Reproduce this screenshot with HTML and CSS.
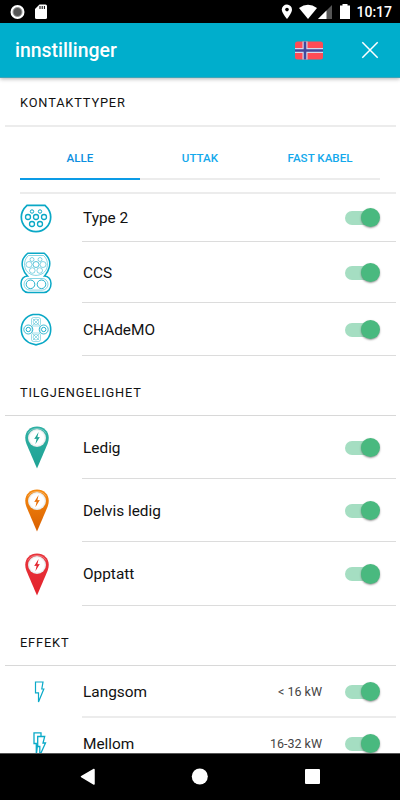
FILE: index.html
```html
<!DOCTYPE html>
<html lang="no">

<head>
    <meta charset="UTF-8">
    <meta name="viewport" content="width=device-width, initial-scale=1.0">
    <title>innstillinger</title>
    <link rel="stylesheet" href="styles.css">
</head>

<body>
    <!-- shared icons -->
    <svg class="defs" width="0" height="0">
        <defs>
            <radialGradient id="disc">
                <stop offset="0.75" stop-color="#fff" />
                <stop offset="1" stop-color="#dfe3e3" />
            </radialGradient>
            <linearGradient id="teal" x1="0" y1="0" x2="0" y2="1">
                <stop offset="0" stop-color="#2fb0a4" />
                <stop offset="1" stop-color="#1fa294" />
            </linearGradient>
            <linearGradient id="orange" x1="0" y1="0" x2="0" y2="1">
                <stop offset="0" stop-color="#f58a10" />
                <stop offset="1" stop-color="#d95f00" />
            </linearGradient>
            <linearGradient id="red" x1="0" y1="0" x2="0" y2="1">
                <stop offset="0" stop-color="#e8353d" />
                <stop offset="1" stop-color="#e3222b" />
            </linearGradient>
            <symbol id="pin" viewBox="0 0 24 43">
                <path d="M12 42.5 L1.500 18 C-2.500 8 3.500 0.500 12 0.500 S26.500 8 22.500 18 Z" />
                <path d="M3 7.500 C6 0.800 18 0.800 21 7.500" fill="none" stroke="#fff" stroke-opacity="0.4" stroke-width="0.800" />
                <circle cx="12" cy="12" r="9" fill="url(#disc)" />
                <path d="M13.600 6 L9.200 13 L11.600 12.800 L10.400 18.300 L14.800 11 L12.400 11.200 Z" fill="currentColor" />
            </symbol>
        </defs>
    </svg>

    <div class="status-bar">
        <svg class="status-left" width="60" height="23" viewBox="0 0 60 23">
            <circle cx="17.500" cy="12" r="7" fill="#fff" />
            <circle cx="17.500" cy="12" r="4.500" fill="#555" stroke="#999" stroke-width="1" />
            <path d="M39.500 4.500 H45.500 Q47 4.500 47 6 V17.500 Q47 19 45.500 19 H36.500 Q35 19 35 17.500 V9 Z" fill="#fff" />
            <path d="M40 6 V9 M42.200 6 V9 M44.400 6 V9" stroke="#000" stroke-width="1" />
        </svg>
        <div class="status-right">
            <svg width="72" height="23" viewBox="280 0 72 23">
                <path d="M288 4.500 A5.200 5.200 0 0 1 293 9.500 C293 13 288 19 288 19 S282.800 13 282.800 9.500 A5.200 5.200 0 0 1 288 4.500 Z" fill="#fff" />
                <circle cx="288" cy="9.600" r="1.800" fill="#000" />
                <path d="M300 8 Q309 1.500 318 8 L309 19 Z" fill="#fff" />
                <path d="M333 5 V19 H319 Z" fill="#555" />
                <path d="M327.500 10.500 V19 H319 Z" fill="#fff" />
                <path d="M343.500 4 H348.500 V5.500 H351 V19 H341 V5.500 H343.500 Z" fill="#fff" />
            </svg>
            <span class="clock">10:17</span>
        </div>
    </div>

    <header class="header">
        <h1>innstillinger</h1>
        <svg class="flag" width="28" height="19" viewBox="0 0 28 19">
            <rect x="0" y="0.500" width="28" height="18" rx="2.500" fill="#ff4b55" />
            <path d="M10 0.500 V18.500 M0 9.500 H28" stroke="#d3d9ea" stroke-width="5" />
            <path d="M10 0.500 V18.500 M0 9.500 H28" stroke="#41479b" stroke-width="2.600" />
        </svg>
        <svg class="close" width="18" height="18" viewBox="0 0 18 18">
            <path d="M1.300 1.300 L16.700 16.700 M16.700 1.300 L1.300 16.700" stroke="#fff" stroke-width="1.500" />
        </svg>
    </header>

    <main class="content">
        <section>
            <h2 class="first">KONTAKTTYPER</h2>
            <div class="tabs">
                <div class="tab active">ALLE</div>
                <div class="tab">UTTAK</div>
                <div class="tab">FAST KABEL</div>
            </div>

            <div class="row type2">
                <div class="icon">
                    <svg width="32" height="29" viewBox="0 0 32 29" fill="none" stroke="#0aa8c6" stroke-width="1.300">
                        <path d="M7 1.300 H25 Q30.700 6.500 30.700 13 A14.700 14.700 0 0 1 1.300 13 Q1.300 6.500 7 1.300 Z" stroke-width="1.700" />
                        <circle cx="12" cy="7.500" r="1.700" stroke-width="1" />
                        <circle cx="20" cy="7.500" r="1.700" stroke-width="1" />
                        <circle cx="8" cy="13" r="2.500" />
                        <circle cx="16" cy="13" r="2.500" />
                        <circle cx="24" cy="13" r="2.500" />
                        <circle cx="12" cy="20" r="2.500" />
                        <circle cx="20" cy="20" r="2.500" />
                    </svg>
                </div>
                <div class="body"><span class="name">Type 2</span><span class="toggle"></span></div>
            </div>
            <div class="row ccs">
                <div class="icon">
                    <svg width="32" height="42" viewBox="0 0 32 42" fill="none" stroke="#0aa8c6" stroke-width="0.500">
                        <path d="M8 1.200 H24 C29 5 31 10 29 16 C28 20 26.500 21.500 24.500 24 C28.500 24 31 27.500 31 31.500 C31 37 28 40.500 24 40.500 H8 C4 40.500 1 37 1 31.500 C1 27.500 3.500 24 7.500 24 C5 21.500 3.800 20 2.800 16 C1 10 3 5 8 1.200 Z" stroke-width="1.500" />
                        <path d="M8.500 3.500 H23.500 C28 7.500 28 13 26.500 17 C22.500 25.500 9.500 25.500 5.500 17 C4 13 4 7.500 8.500 3.500 Z" />
                        <circle cx="12" cy="7.500" r="2" />
                        <circle cx="20" cy="7.500" r="2" />
                        <circle cx="9" cy="12.500" r="3" />
                        <circle cx="16" cy="12.500" r="3" stroke-width="0.700" />
                        <circle cx="23" cy="12.500" r="3" />
                        <circle cx="12.300" cy="18.500" r="2.800" />
                        <circle cx="19.700" cy="18.500" r="2.800" />
                        <rect x="4" y="26.500" width="24" height="11.600" rx="5.800" />
                        <circle cx="10.500" cy="32.300" r="4.300" stroke-width="0.900" />
                        <circle cx="21.500" cy="32.300" r="4.300" stroke-width="0.900" />
                    </svg>
                </div>
                <div class="body"><span class="name">CCS</span><span class="toggle"></span></div>
            </div>
            <div class="row chademo">
                <div class="icon">
                    <svg width="32" height="33" viewBox="0 0 32 33" fill="none" stroke="#0aa8c6" stroke-width="0.400">
                        <path d="M13 1.500 H19 C26 3 30.700 9 30.700 16.500 S26 29.500 19 31 L16 31.800 L13 31 C6 29.500 1.300 24 1.300 16.500 S6 3 13 1.500 Z" stroke-width="1.600" />
                        <circle cx="8.300" cy="16.500" r="4.500" stroke-width="0.800" />
                        <circle cx="8.300" cy="16.500" r="2.200" stroke-width="0.900" />
                        <circle cx="23.700" cy="16.500" r="4.500" stroke-width="0.800" />
                        <circle cx="23.700" cy="16.500" r="2.200" stroke-width="0.900" />
                        <rect x="11.500" y="4.500" width="9" height="8.500" rx="2" />
                        <rect x="11.500" y="20" width="9" height="8.500" rx="2" />
                        <circle cx="16" cy="8.800" r="2.800" />
                        <circle cx="16" cy="24.200" r="2.800" />
                        <path d="M13 6 L19 12 M19 6 L13 12 M13 21 L19 27 M19 21 L13 27 M12 13 V20 M20 13 V20" />
                    </svg>
                </div>
                <div class="body"><span class="name">CHAdeMO</span><span class="toggle"></span></div>
            </div>
        </section>

        <section>
            <h2>TILGJENGELIGHET</h2>
            <div class="row pin-row">
                <div class="icon teal"><svg class="pin" width="24" height="43" fill="url(#teal)"><use href="#pin" /></svg></div>
                <div class="body"><span class="name">Ledig</span><span class="toggle"></span></div>
            </div>
            <div class="row pin-row">
                <div class="icon orange"><svg class="pin" width="24" height="43" fill="url(#orange)"><use href="#pin" /></svg></div>
                <div class="body"><span class="name">Delvis ledig</span><span class="toggle"></span></div>
            </div>
            <div class="row pin-row last">
                <div class="icon red"><svg class="pin" width="24" height="43" fill="url(#red)"><use href="#pin" /></svg></div>
                <div class="body"><span class="name">Opptatt</span><span class="toggle"></span></div>
            </div>
        </section>

        <section>
            <h2>EFFEKT</h2>
            <div class="row power">
                <div class="icon">
                    <svg class="bolt" width="16" height="24" viewBox="0 0 16 24" fill="none" stroke="#0aaac8" stroke-width="1.200">
                        <path d="M4.500 2 H12 L10.800 9 H12.800 L7.500 22 V12.800 H4.500 Z" />
                    </svg>
                </div>
                <div class="body"><span class="name">Langsom</span><span class="power-range">&lt; 16 kW</span><span class="toggle"></span></div>
            </div>
            <div class="row power">
                <div class="icon">
                    <svg class="bolt" width="16" height="26" viewBox="0 0 16 26" fill="none" stroke="#0aaac8" stroke-width="1.300">
                        <path d="M6.500 14 L5.300 24 V12.500 H3 V1.800 H10 V5" />
                        <path d="M6.700 5.500 H13.700 L12 12 H14.500 L8.800 24.500 V15.500 H6.700 Z" />
                    </svg>
                </div>
                <div class="body"><span class="name">Mellom</span><span class="power-range">16-32 kW</span><span class="toggle"></span></div>
            </div>
        </section>
    </main>

    <nav class="nav-bar">
        <svg width="400" height="46" viewBox="0 0 400 46">
            <path d="M94 15.500 V30 L81.500 22.700 Z" fill="#fff" stroke="#fff" stroke-width="1.500" stroke-linejoin="round" />
            <circle cx="199.800" cy="22.500" r="8" fill="#fff" />
            <rect x="305" y="15" width="15" height="15" rx="1" fill="#fff" />
        </svg>
    </nav>
</body>

</html>
```
FILE: styles.css
```css
* {
    box-sizing: border-box;
}

body {
    margin: 0;
    height: 800px;
    display: flex;
    flex-direction: column;
    overflow: hidden;
    background-color: #fff;
    color: #111;
    font-family: Roboto, sans-serif;
}

svg {
    display: block;
    flex: none;
}

.defs {
    position: absolute;
}

.status-bar {
    flex: none;
    display: flex;
    justify-content: space-between;
    height: 23px;
    background-color: #000;
}

.status-right {
    display: flex;
    padding-right: 8px;
    gap: 5px;
}

.clock {
    color: #fff;
    font-size: 14px;
    font-weight: 500;
    line-height: 25px;
}

.header {
    flex: none;
    display: flex;
    align-items: center;
    height: 55px;
    padding: 0 21px 0 15px;
    background-color: #00aecc;
    border-bottom: 1px solid #3fa5b8;
    box-shadow: 0 1px 4px rgba(0, 0, 0, 0.3);
    z-index: 1;
}

h1 {
    flex: 1;
    margin: 0;
    padding-top: 1px;
    color: #fff;
    font-size: 19.4px;
    font-weight: 500;
}

.close {
    margin-left: 38px;
}

.content {
    flex: 1;
    min-height: 0;
    overflow: hidden;
    padding: 0 4px 0 5px;
}

h2 {
    margin: 0;
    height: 60px;
    padding: 13px 0 0 15px;
    border-bottom: 1px solid #d8d8d8;
    font-size: 12.8px;
    font-weight: 400;
    line-height: 48px;
    letter-spacing: 0.85px;
}

h2.first {
    height: 49px;
    padding-top: 1px;
    border-bottom: 2px solid #ececec;
}

.tabs {
    display: flex;
    height: 53px;
    margin: 0 16px 12px 15px;
}

.tab {
    flex: 1;
    border-bottom: 2px solid #ececec;
    color: #14a9ec;
    font-size: 11.6px;
    font-weight: 500;
    line-height: 63px;
    text-align: center;
}

.tab.active {
    border-bottom-color: #0c9be6;
    color: #0c8fe0;
}

.row {
    display: flex;
}

.icon {
    flex: none;
    display: flex;
    align-items: center;
    width: 62px;
    margin-left: 15px;
}

.body {
    flex: 1;
    display: flex;
    align-items: center;
    padding: 1px 16px 0 1px;
    border-bottom: 1px solid #dcdcdc;
}

.name {
    flex: 1;
    font-size: 15.4px;
}

.type2 {
    height: 50px;
    border-top: 2px solid #ececec;
    margin-left: 15px;
}

.type2 .icon {
    margin-left: 0;
}

.type2 .body {
    padding-top: 0;
}

.ccs {
    height: 61px;
}

.chademo {
    height: 53px;
}

.pin-row {
    height: 63px;
}

.pin-row.last {
    height: 64px;
}

.pin {
    margin-left: 5px;
}

.teal {
    color: #1fa294;
}

.orange {
    color: #e8700a;
}

.red {
    color: #e3222b;
}

.power {
    height: 52px;
}

.power .body {
    border-bottom: 2px solid #ececec;
}

.bolt {
    margin-left: 11px;
}

.power-range {
    margin-right: 23px;
    color: #444;
    font-size: 12.5px;
}

.toggle {
    position: relative;
    width: 35px;
    height: 14px;
    border-radius: 7px;
    background: linear-gradient(#a5dec2, #a5dec2) no-repeat left / 30px 14px;
}

.toggle::after {
    content: "";
    position: absolute;
    top: -3px;
    right: 0;
    width: 19.5px;
    height: 19.5px;
    border-radius: 50%;
    background-color: #49b97f;
    box-shadow: 0 1px 2px rgba(0, 0, 0, 0.4);
}

.nav-bar {
    flex: none;
    height: 47px;
    border-top: 1px solid #555;
    background-color: #000;
}
```
